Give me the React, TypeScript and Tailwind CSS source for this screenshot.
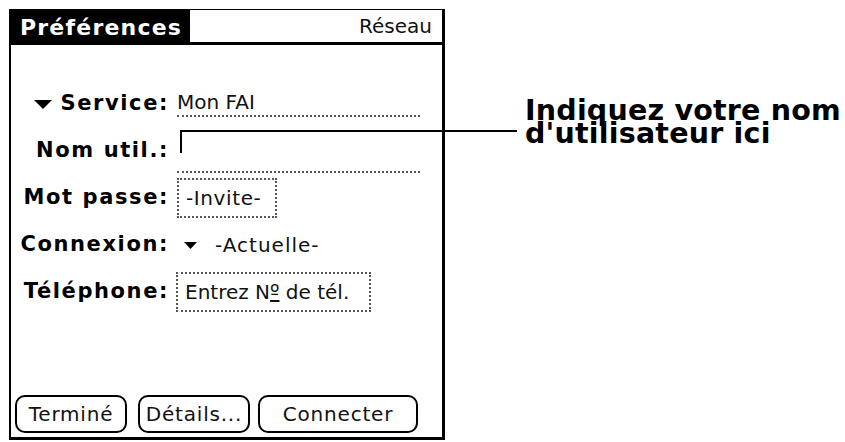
import React from "react";

const labelCls =
  "w-[158px] shrink-0 text-right text-[21px] font-bold tracking-[1.6px] text-black";
const valueCls = "text-[20px] tracking-[0.6px] text-[#111]";

function Triangle({ className, w = 14, h = 8 }: { className?: string; w?: number; h?: number }) {
  return (
    <svg className={className} width={w} height={h} viewBox={`0 0 ${w} ${h}`}>
      <path d={`M0 0 H${w} L${w / 2} ${h} Z`} fill="#000" />
    </svg>
  );
}

function Row({ children }: { children: React.ReactNode }) {
  return <div className="flex h-[40px] items-center">{children}</div>;
}

function PalmButton({ label, width }: { label: string; width: string }) {
  return (
    <button
      type="button"
      className={`${width} h-[38px] rounded-[10px] border-2 border-black bg-white text-[20px] leading-none tracking-[0.8px] text-[#111]`}
    >
      {label}
    </button>
  );
}

export default function App() {
  return (
    <div className="relative h-[442px] w-[845px] overflow-hidden bg-white font-['DejaVu_Sans',sans-serif] text-black">
      <div className="pl-[9px] pt-[9px]">
        <div className="flex h-[431px] w-[436px] flex-col border-b-[3px] border-l-2 border-r-[3px] border-t border-black">
          {/* title bar */}
          <div className="flex h-[35px]">
            <div className="flex w-[179px] items-center bg-black pl-[9px] text-[22px] font-bold tracking-[1.2px] text-white">
              Préférences
            </div>
            <div className="flex flex-1 items-center justify-end border-b-[3px] border-black pr-[10px] text-[20px] text-[#111]">
              Réseau
            </div>
          </div>

          {/* fields */}
          <div className="mt-[39px] flex flex-col gap-[7px]">
            <Row>
              <div className={`${labelCls} flex items-center justify-end`}>
                <Triangle className="mr-[9px]" w={18} h={9} />
                Service:
              </div>
              <div
                className={`${valueCls} ml-[8px] h-[26px] w-[243px] border-b-2 border-dotted border-[#555] leading-[22px] tracking-[0px]`}
              >
                Mon FAI
              </div>
            </Row>
            <Row>
              <div className={labelCls}>Nom util.:</div>
              <div className="ml-[8px] mt-[18px] h-[26px] w-[243px] border-b-2 border-dotted border-[#555]" />
            </Row>
            <Row>
              <div className={labelCls}>Mot passe:</div>
              <div
                className={`${valueCls} ml-[8px] flex h-[40px] w-[100px] items-center border-2 border-dotted border-[#555] pl-[7px]`}
              >
                -Invite-
              </div>
            </Row>
            <Row>
              <div className={labelCls}>Connexion:</div>
              <div className={`${valueCls} ml-[15px] flex items-center tracking-[1px]`}>
                <Triangle className="mr-[18px]" w={13} h={7} />
                -Actuelle-
              </div>
            </Row>
            <Row>
              <div className={labelCls}>Téléphone:</div>
              <div
                className={`${valueCls} ml-[7px] flex h-[40px] w-[195px] items-center border-2 border-dotted border-[#555] pl-[7px] tracking-[0px]`}
              >
                Entrez N<span className="underline">º</span>&nbsp;de tél.
              </div>
            </Row>
          </div>

          {/* buttons */}
          <div className="mt-auto flex items-center pb-[4px] pl-[4px]">
            <PalmButton label="Terminé" width="w-[112px]" />
            <div className="ml-[11px]">
              <PalmButton label="Détails..." width="w-[112px]" />
            </div>
            <div className="ml-[8px]">
              <PalmButton label="Connecter" width="w-[160px]" />
            </div>
          </div>
        </div>
      </div>

      {/* callout */}
      <div className="absolute left-[180px] top-[130px] h-[2px] w-[337px] bg-black" />
      <div className="absolute left-[180px] top-[130px] h-[23px] w-[2px] bg-black" />
      <div className="absolute left-[525px] top-[99px] text-[28.5px] font-bold leading-[23px] tracking-[0.2px] text-black">
        <div>Indiquez votre nom</div>
        <div>d'utilisateur ici</div>
      </div>
    </div>
  );
}
